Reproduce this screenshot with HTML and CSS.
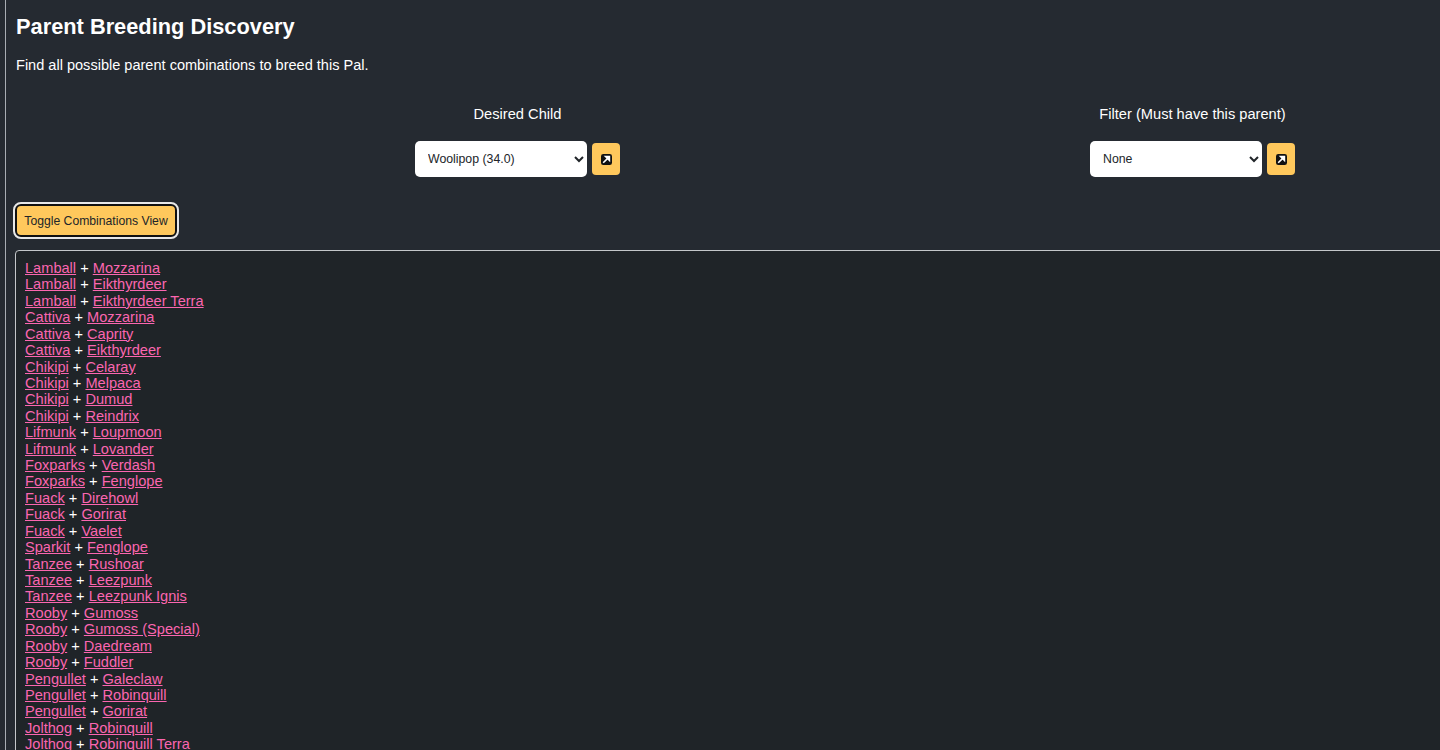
FILE: index.html
```html
<!DOCTYPE html>
<html lang="en">
<head>
  <meta charset="UTF-8" />
  <title>Parent Breeding Discovery</title>
  <link rel="stylesheet" href="styles.css">
</head>
<body>
  <div class="main">
    <h1>Parent Breeding Discovery</h1>
    <p class="intro">Find all possible parent combinations to breed this Pal.</p>

    <div class="controls">
      <div class="control">
        <label for="childSelect">Desired Child</label>
        <div class="select-row">
          <select id="childSelect">
            <option>Woolipop (34.0)</option>
          </select>
          <button class="icon-button" aria-label="Open">
            <svg viewBox="0 0 12 12" width="11" height="11"><rect width="12" height="12" rx="2.5" fill="#111"/><path d="M2.4 9.6 7 5M5 2.8h4.2V7z" stroke="#fff" stroke-width="1.7" fill="#fff"/></svg>
          </button>
        </div>
      </div>
      <div class="control">
        <label for="parentSelect">Filter (Must have this parent)</label>
        <div class="select-row">
          <select id="parentSelect">
            <option>None</option>
          </select>
          <button class="icon-button" aria-label="Open">
            <svg viewBox="0 0 12 12" width="11" height="11"><rect width="12" height="12" rx="2.5" fill="#111"/><path d="M2.4 9.6 7 5M5 2.8h4.2V7z" stroke="#fff" stroke-width="1.7" fill="#fff"/></svg>
          </button>
        </div>
      </div>
    </div>

    <button class="toggle-button">Toggle Combinations View</button>

    <div class="combos">
      <div><a href="#">Lamball</a> + <a href="#">Mozzarina</a></div>
      <div><a href="#">Lamball</a> + <a href="#">Eikthyrdeer</a></div>
      <div><a href="#">Lamball</a> + <a href="#">Eikthyrdeer Terra</a></div>
      <div><a href="#">Cattiva</a> + <a href="#">Mozzarina</a></div>
      <div><a href="#">Cattiva</a> + <a href="#">Caprity</a></div>
      <div><a href="#">Cattiva</a> + <a href="#">Eikthyrdeer</a></div>
      <div><a href="#">Chikipi</a> + <a href="#">Celaray</a></div>
      <div><a href="#">Chikipi</a> + <a href="#">Melpaca</a></div>
      <div><a href="#">Chikipi</a> + <a href="#">Dumud</a></div>
      <div><a href="#">Chikipi</a> + <a href="#">Reindrix</a></div>
      <div><a href="#">Lifmunk</a> + <a href="#">Loupmoon</a></div>
      <div><a href="#">Lifmunk</a> + <a href="#">Lovander</a></div>
      <div><a href="#">Foxparks</a> + <a href="#">Verdash</a></div>
      <div><a href="#">Foxparks</a> + <a href="#">Fenglope</a></div>
      <div><a href="#">Fuack</a> + <a href="#">Direhowl</a></div>
      <div><a href="#">Fuack</a> + <a href="#">Gorirat</a></div>
      <div><a href="#">Fuack</a> + <a href="#">Vaelet</a></div>
      <div><a href="#">Sparkit</a> + <a href="#">Fenglope</a></div>
      <div><a href="#">Tanzee</a> + <a href="#">Rushoar</a></div>
      <div><a href="#">Tanzee</a> + <a href="#">Leezpunk</a></div>
      <div><a href="#">Tanzee</a> + <a href="#">Leezpunk Ignis</a></div>
      <div><a href="#">Rooby</a> + <a href="#">Gumoss</a></div>
      <div><a href="#">Rooby</a> + <a href="#">Gumoss (Special)</a></div>
      <div><a href="#">Rooby</a> + <a href="#">Daedream</a></div>
      <div><a href="#">Rooby</a> + <a href="#">Fuddler</a></div>
      <div><a href="#">Pengullet</a> + <a href="#">Galeclaw</a></div>
      <div><a href="#">Pengullet</a> + <a href="#">Robinquill</a></div>
      <div><a href="#">Pengullet</a> + <a href="#">Gorirat</a></div>
      <div><a href="#">Jolthog</a> + <a href="#">Robinquill</a></div>
      <div><a href="#">Jolthog</a> + <a href="#">Robinquill Terra</a></div>
    </div>
  </div>
</body>
</html>
```

FILE: styles.css
```css
html { overflow: hidden; }
body {
  margin: 0 0 0 5px;
  height: 100vh;
  overflow: hidden;
  background: #252a31;
  color: #fff;
  font-family: "Liberation Sans", Arial, sans-serif;
  border-left: 1px solid #a9adb3;
}
.main {
  width: 1680px;
  padding: 14px 0 0 9px;
}
h1 {
  margin: 0 0 0 1px;
  font-size: 21.8px;
  line-height: 26px;
  font-weight: bold;
}
.intro {
  margin: 17px 0 0 1px;
  font-size: 14.55px;
  line-height: 17px;
}
.controls {
  display: flex;
  justify-content: center;
  gap: 470px;
  margin-top: 32px;
}
.control {
  display: flex;
  flex-direction: column;
  align-items: center;
  gap: 18px;
}
.control label {
  font-size: 14.65px;
  line-height: 17px;
}
.select-row {
  display: flex;
  align-items: center;
  gap: 5px;
}
.select-row select {
  width: 172px;
  height: 36px;
  padding: 0 9px;
  background: #fff;
  border: none;
  border-radius: 5px;
  color: #212529;
  font-family: inherit;
  font-size: 12.3px;
}
.icon-button {
  display: flex;
  align-items: center;
  justify-content: center;
  width: 28px;
  height: 32px;
  padding: 0;
  background: #ffc85c;
  border: none;
  border-radius: 4px;
}
.toggle-button {
  display: block;
  margin-top: 27px;
  width: 162px;
  height: 33px;
  padding: 0;
  background: #ffc85c;
  border: 2px solid #111;
  border-radius: 6px;
  outline: 2px solid #e8e8e8;
  outline-offset: 0;
  color: #212529;
  font-family: inherit;
  font-size: 12.2px;
}
.combos {
  margin-top: 13px;
  padding: 9px 9px 10px;
  background: #1f2428;
  border: 1px solid #c4c7ca;
  border-radius: 4px;
  font-size: 14.6px;
  line-height: 16.42px;
}
.combos a { color: #fb66b0; }
```
